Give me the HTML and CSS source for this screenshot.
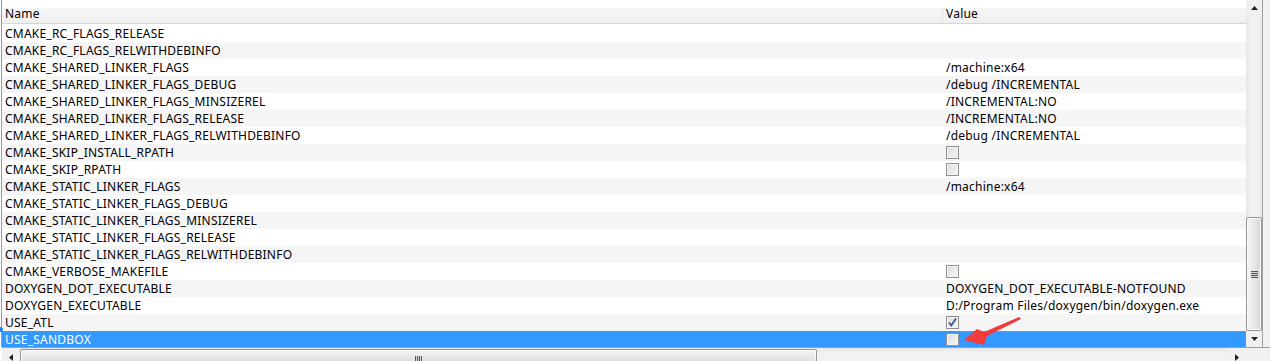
FILE: index.html
```html
<!DOCTYPE html>
<html>
<head>
<meta charset="utf-8">
<link rel="stylesheet" href="styles.css">
</head>
<body>
<div class="window">
  <div class="main">
    <div class="table">
      <div class="header">
        <div class="hcell hname">Name</div>
        <div class="hcell hvalue">Value</div>
      </div>
      <div class="rows">
        <div class="row"><div class="c name">CMAKE_RC_FLAGS_RELEASE</div><div class="c value"></div></div>
        <div class="row"><div class="c name">CMAKE_RC_FLAGS_RELWITHDEBINFO</div><div class="c value"></div></div>
        <div class="row"><div class="c name">CMAKE_SHARED_LINKER_FLAGS</div><div class="c value">/machine:x64</div></div>
        <div class="row"><div class="c name">CMAKE_SHARED_LINKER_FLAGS_DEBUG</div><div class="c value">/debug /INCREMENTAL</div></div>
        <div class="row"><div class="c name">CMAKE_SHARED_LINKER_FLAGS_MINSIZEREL</div><div class="c value">/INCREMENTAL:NO</div></div>
        <div class="row"><div class="c name">CMAKE_SHARED_LINKER_FLAGS_RELEASE</div><div class="c value">/INCREMENTAL:NO</div></div>
        <div class="row"><div class="c name">CMAKE_SHARED_LINKER_FLAGS_RELWITHDEBINFO</div><div class="c value">/debug /INCREMENTAL</div></div>
        <div class="row"><div class="c name">CMAKE_SKIP_INSTALL_RPATH</div><div class="c value"><span class="cb"></span></div></div>
        <div class="row"><div class="c name">CMAKE_SKIP_RPATH</div><div class="c value"><span class="cb"></span></div></div>
        <div class="row"><div class="c name">CMAKE_STATIC_LINKER_FLAGS</div><div class="c value">/machine:x64</div></div>
        <div class="row"><div class="c name">CMAKE_STATIC_LINKER_FLAGS_DEBUG</div><div class="c value"></div></div>
        <div class="row"><div class="c name">CMAKE_STATIC_LINKER_FLAGS_MINSIZEREL</div><div class="c value"></div></div>
        <div class="row"><div class="c name">CMAKE_STATIC_LINKER_FLAGS_RELEASE</div><div class="c value"></div></div>
        <div class="row"><div class="c name">CMAKE_STATIC_LINKER_FLAGS_RELWITHDEBINFO</div><div class="c value"></div></div>
        <div class="row"><div class="c name">CMAKE_VERBOSE_MAKEFILE</div><div class="c value"><span class="cb"></span></div></div>
        <div class="row"><div class="c name">DOXYGEN_DOT_EXECUTABLE</div><div class="c value">DOXYGEN_DOT_EXECUTABLE-NOTFOUND</div></div>
        <div class="row"><div class="c name">DOXYGEN_EXECUTABLE</div><div class="c value">D:/Program Files/doxygen/bin/doxygen.exe</div></div>
        <div class="row"><div class="c name">USE_ATL</div><div class="c value"><span class="cb checked"><svg width="11" height="11" viewBox="0 0 11 11"><path d="M2 5.5 L4.3 8.5 L9 1.5" fill="none" stroke="#3d5597" stroke-width="1.8"/></svg></span></div></div>
        <div class="row selected"><div class="c name">USE_SANDBOX</div><div class="c value"><span class="cb"></span><span class="focus"></span></div></div>
      </div>
    </div>
    <div class="vscroll">
      <div class="sbtn"><svg width="7" height="4" viewBox="0 0 7 4"><path d="M0 4 L3.5 0 L7 4 Z" fill="#222"/></svg></div>
      <div class="vtrack">
        <div class="vthumb"><span class="grip-v"></span></div>
      </div>
      <div class="sbtn"><svg width="7" height="4" viewBox="0 0 7 4"><path d="M0 0 L7 0 L3.5 4 Z" fill="#222"/></svg></div>
    </div>
    <div class="vline"></div>
    <div class="edge"></div>
  </div>
  <div class="hscroll">
    <div class="hbtn"><svg width="4" height="7" viewBox="0 0 4 7"><path d="M4 0 L0 3.5 L4 7 Z" fill="#222"/></svg></div>
    <div class="htrack">
      <div class="hthumb"><span class="grip-h"></span></div>
    </div>
    <div class="hbtn"><svg width="4" height="7" viewBox="0 0 4 7"><path d="M0 0 L4 3.5 L0 7 Z" fill="#222"/></svg></div>
    <div class="corner"></div>
  </div>
  <span class="dot"></span>
  <svg class="arrow" width="70" height="40" viewBox="0 0 70 40"><path d="M4 24 L17 13 L24 16 L59 1 L61 3 L27 20 L24 29 Z" fill="#f03c3c"/></svg>
</div>
</body>
</html>
```
FILE: styles.css
```css
html, body {
  margin: 0;
  padding: 0;
  background: #fff;
}
body {
  font-family: "Noto Sans", "Open Sans", sans-serif;
  font-size: 12px;
  letter-spacing: 0.22px;
  color: #000;
}
.window {
  position: relative;
  width: 1270px;
  height: 361px;
  overflow: hidden;
  padding-left: 1px;
  box-sizing: border-box;
  display: flex;
  flex-direction: column;
}
.main {
  display: flex;
  height: 347px;
}
.table {
  width: 1244px;
  border-left: 1px solid #9a9a9a;
  display: flex;
  flex-direction: column;
  overflow: hidden;
}
.header {
  height: 25px;
  display: flex;
  background: linear-gradient(#fff 0 8px, #f6f6f6 8px, #efefef 23px, #d5d5d5 23px 24px, #fff 24px);
  flex: none;
}
.hcell {
  padding-top: 6px;
  line-height: 15px;
  box-sizing: border-box;
}
.hname {
  width: 940px;
  padding-left: 3px;
}
.hvalue {
  flex: 1;
  padding-left: 4px;
  background: linear-gradient(#e3e3e3, #e3e3e3) no-repeat 0 8px / 1px 15px;
}
.rows {
  display: flex;
  flex-direction: column;
}
.row {
  display: flex;
  height: 17px;
  line-height: 17px;
  flex: none;
}
.row:nth-child(even) {
  background: #f5f5f5;
}
.row.selected {
  background: #3399ff;
  color: #fff;
}
.c {
  white-space: nowrap;
  overflow: hidden;
}
.name {
  width: 940px;
  padding-left: 3px;
  box-sizing: border-box;
}
.value {
  flex: 1;
  padding-left: 4px;
  display: flex;
  align-items: center;
}
.cb {
  width: 13px;
  height: 13px;
  box-sizing: border-box;
  border: 1px solid #8f8f8f;
  background: linear-gradient(135deg, #dcdcdc, #f6f6f6);
  box-shadow: inset 0 0 0 1px #f4f4f4;
  display: inline-flex;
  align-items: center;
  justify-content: center;
  flex: none;
}
.focus {
  flex: 1;
  align-self: stretch;
  margin-left: 3px;
  border: 1px dotted #e0852e;
}
.vscroll {
  width: 16px;
  background: #f0f0f0;
  display: flex;
  flex-direction: column;
}
.sbtn {
  height: 16px;
  display: flex;
  align-items: center;
  justify-content: center;
  flex: none;
}
.vtrack {
  flex: 1;
  display: flex;
  flex-direction: column;
  justify-content: flex-end;
  background: linear-gradient(90deg, #e6e6e6, #f2f2f2 30%, #f2f2f2 70%, #e6e6e6);
}
.vthumb {
  height: 114px;
  border: 1px solid #979797;
  border-radius: 2px;
  box-sizing: border-box;
  background: linear-gradient(90deg, #f4f4f4, #e8e8e8 50%, #d6d6d6);
  box-shadow: inset 0 0 0 1px #fafafa;
  display: flex;
  align-items: center;
  justify-content: center;
}
.grip-v {
  width: 7px;
  height: 7px;
  background: repeating-linear-gradient(#555 0 1px, #d8d8d8 1px 2px);
}
.vline {
  width: 1px;
  background: #a3a3a3;
}
.edge {
  width: 7px;
  background: #f0f0f0;
}
.hscroll {
  height: 14px;
  display: flex;
  border-top: 1px solid #a0a0a0;
  background: #f0f0f0;
  margin-left: 1px;
}
.hbtn {
  width: 17px;
  display: flex;
  align-items: flex-end;
  justify-content: center;
  padding-bottom: 1px;
  box-sizing: border-box;
}
.htrack {
  width: 1209px;
  padding-top: 1px;
  padding-left: 1px;
  box-sizing: border-box;
  background: linear-gradient(#e6e6e6, #f2f2f2 40%);
}
.hthumb {
  width: 797px;
  height: 16px;
  border: 1px solid #979797;
  border-radius: 2px;
  box-sizing: border-box;
  background: linear-gradient(#f4f4f4, #e8e8e8 50%, #d6d6d6);
  box-shadow: inset 0 0 0 1px #fafafa;
  display: flex;
  justify-content: center;
  padding-top: 6px;
}
.grip-h {
  width: 7px;
  height: 8px;
  background: repeating-linear-gradient(90deg, #555 0 1px, #d8d8d8 1px 2px);
}
.corner {
  flex: 1;
  background: #f0f0f0;
}
.dot {
  position: absolute;
  left: -2px;
  top: 327px;
  width: 5px;
  height: 5px;
  border-radius: 50%;
  background: #1e88e5;
}
.arrow {
  position: absolute;
  left: 960px;
  top: 316px;
}
```
